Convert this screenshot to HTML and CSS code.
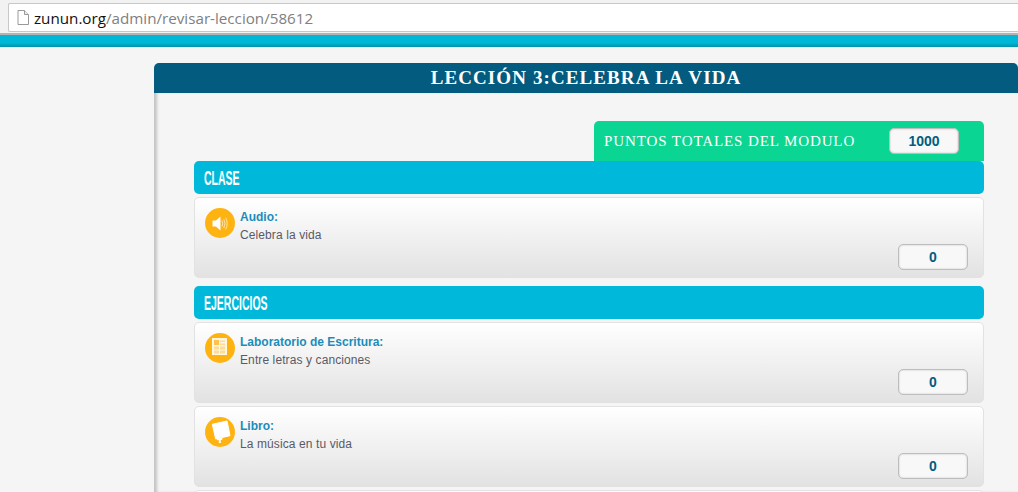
FILE: index.html
```html
<!DOCTYPE html>
<html lang="es">
<head>
<meta charset="UTF-8">
<title>Revisar lección</title>
<link rel="stylesheet" href="styles.css">
</head>
<body>

<div class="browser-bar">
  <div class="url-box">
    <svg class="page-icon" width="12" height="15" viewBox="0 0 12 15">
      <path d="M1 .5h6.500L11.500 4.500v10H1z" fill="#fff" stroke="#999"/>
      <path d="M7.500 .5v4h4" fill="#eee" stroke="#999"/>
    </svg>
    <span class="url-host">zunun.org</span><span class="url-path">/admin/revisar-leccion/58612</span>
  </div>
</div>
<div class="top-stripe"></div>

<div class="page">
  <div class="panel">
    <h1 class="panel-title">LECCIÓN 3:CELEBRA LA VIDA</h1>
    <div class="panel-body">

      <div class="total-row">
        <div class="total-box">
          <span class="total-label">PUNTOS TOTALES DEL MODULO</span>
          <span class="score score-total">1000</span>
        </div>
      </div>

      <h2 class="section-title"><span>CLASE</span></h2>
      <div class="item">
        <div class="item-icon">
          <svg width="30" height="30" viewBox="0 0 30 30">
            <path d="M7.500 12.500h3.500l4.500-4v14l-4.500-4H7.500z" fill="#fff"/>
            <path d="M17 12.500q1.500 3 0 6M18.800 11q2.400 4.500 0 9M20.600 9.500q3.200 6 0 12" fill="none" stroke="#ffe9bd" stroke-width=".9"/>
          </svg>
        </div>
        <div class="item-text">
          <div class="item-type">Audio:</div>
          <div class="item-name">Celebra la vida</div>
        </div>
        <span class="score">0</span>
      </div>

      <h2 class="section-title section-gap"><span>EJERCICIOS</span></h2>
      <div class="item">
        <div class="item-icon">
          <svg width="30" height="30" viewBox="0 0 30 30">
            <rect x="7" y="5" width="15" height="17" fill="#fff6e2"/>
            <rect x="9" y="7" width="5" height="5" fill="#ffc34d"/>
            <rect x="15" y="7.500" width="5" height="1.500" fill="#ffdc96"/>
            <rect x="15" y="10.500" width="5" height="1.500" fill="#ffdc96"/>
            <rect x="9" y="13.500" width="5" height="3" fill="#ffdc96"/>
            <rect x="15" y="13.500" width="5" height="3" fill="#ffdc96"/>
            <rect x="9" y="17.500" width="5" height="3" fill="#ffdc96"/>
            <rect x="15" y="17.500" width="5" height="3" fill="#ffdc96"/>
          </svg>
        </div>
        <div class="item-text">
          <div class="item-type">Laboratorio de Escritura:</div>
          <div class="item-name">Entre letras y canciones</div>
        </div>
        <span class="score">0</span>
      </div>
      <div class="item">
        <div class="item-icon">
          <svg width="30" height="30" viewBox="0 0 30 30">
            <path d="M7.300 7.300 22 4l3 14.700L10.700 22z" fill="#fff" stroke="#fff" stroke-linejoin="round"/>
            <path d="M12 21h5.300v2l-1.500-.2v3.200h-2v-3l-1.800.3z" fill="#fff"/>
          </svg>
        </div>
        <div class="item-text">
          <div class="item-type">Libro:</div>
          <div class="item-name">La música en tu vida</div>
        </div>
        <span class="score">0</span>
      </div>
      <div class="item"></div>

    </div>
  </div>
</div>

</body>
</html>
```

FILE: styles.css
```css
html, body {
  height: 100%;
}

body {
  margin: 0;
  background: #f5f5f5;
  font-family: "Liberation Sans", Arial, sans-serif;
  overflow: hidden;
}

.browser-bar {
  height: 35px;
  padding: 3px 0 0 8px;
  box-sizing: border-box;
  background: #f2f2f2;
  border-bottom: 2px solid #b4b4b4;
}

.url-box {
  display: flex;
  align-items: center;
  height: 27px;
  padding-left: 8px;
  background: #fff;
  border: 1px solid #c8c8c8;
  border-right: 0;
  border-radius: 2px 0 0 2px;
  font-family: "Open Sans", sans-serif;
  font-size: 15.2px;
}

.page-icon {
  margin-right: 5px;
}

.url-host {
  color: #111;
}

.url-path {
  color: #808080;
}

.top-stripe {
  height: 12px;
  background: linear-gradient(#00b7d7 65%, #0092aa);
}

.page {
  padding: 16px 0 0 154px;
}

.panel {
  width: 864px;
}

.panel-title {
  margin: 0;
  height: 30px;
  line-height: 30px;
  background: #035c80;
  border-radius: 5px 5px 0 0;
  color: #fff;
  text-align: center;
  font-family: "Liberation Serif", serif;
  font-size: 19px;
  font-weight: bold;
  letter-spacing: 1.1px;
}

.panel-body {
  padding: 28px 34px 0 40px;
  box-shadow: inset 4px 0 3px -1px #c4c4c4;
  height: 371px;
  overflow: hidden;
}

.total-row {
  display: flex;
  justify-content: flex-end;
}

.total-box {
  display: flex;
  align-items: center;
  justify-content: space-between;
  width: 390px;
  height: 40px;
  padding: 0 25px 0 10px;
  box-sizing: border-box;
  background: #0bd592;
  border-radius: 5px 5px 0 0;
}

.total-label {
  color: #fff;
  font-family: "Liberation Serif", serif;
  font-size: 15px;
  letter-spacing: .9px;
}

.section-title {
  margin: 0 0 3px;
  height: 33px;
  line-height: 33px;
  padding-left: 10px;
  background: #00b9da;
  border-radius: 5px;
  color: #fff;
  font-size: 21px;
  font-weight: bold;
}

.section-title span {
  display: inline-block;
  transform: scaleX(.5);
  transform-origin: left center;
}

.section-gap {
  margin-top: 8px;
}

.item {
  position: relative;
  display: flex;
  height: 81px;
  margin-bottom: 3px;
  padding: 10px;
  box-sizing: border-box;
  background: linear-gradient(#fff, #e2e2e2);
  border: 1px solid #e2e2e2;
  border-radius: 5px;
}

.item-icon {
  flex: none;
  width: 30px;
  height: 30px;
  margin-right: 5px;
  background: #ffb311;
  border-radius: 50%;
}

.item-icon svg {
  display: block;
}

.item-text {
  font-size: 12px;
  line-height: 18px;
}

.item-type {
  color: #1a8dbb;
  font-weight: bold;
}

.item-name {
  color: #5a5a66;
  letter-spacing: .1px;
}

.score {
  position: absolute;
  right: 15px;
  bottom: 7px;
  width: 70px;
  height: 26px;
  line-height: 24px;
  box-sizing: border-box;
  background: #f8f8f8;
  border: 1px solid #bdbdbd;
  box-shadow: inset 0 0 2px #bdbdbd;
  border-radius: 5px;
  color: #035c80;
  text-align: center;
  font-size: 14px;
  font-weight: bold;
}

.score-total {
  position: static;
}
```
